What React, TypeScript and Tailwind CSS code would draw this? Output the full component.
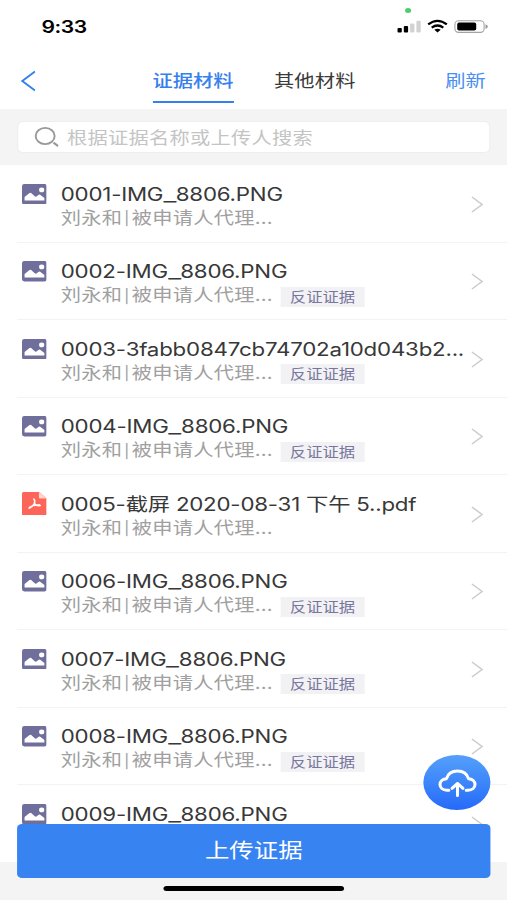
type FileKind = 'image' | 'pdf';

interface Evidence {
  name: string;
  kind: FileKind;
  counter: boolean;
  owner?: string;
}

const owner = '刘永和|被申请人代理...';

const files: Evidence[] = [
  { name: '0001-IMG_8806.PNG', kind: 'image', counter: false, owner },
  { name: '0002-IMG_8806.PNG', kind: 'image', counter: true, owner },
  { name: '0003-3fabb0847cb74702a10d043b2...', kind: 'image', counter: true, owner },
  { name: '0004-IMG_8806.PNG', kind: 'image', counter: true, owner },
  { name: '0005-截屏 2020-08-31 下午 5..pdf', kind: 'pdf', counter: false, owner },
  { name: '0006-IMG_8806.PNG', kind: 'image', counter: true, owner },
  { name: '0007-IMG_8806.PNG', kind: 'image', counter: true, owner },
  { name: '0008-IMG_8806.PNG', kind: 'image', counter: true, owner },
  { name: '0009-IMG_8806.PNG', kind: 'image', counter: false },
];

function ImageIcon() {
  return (
    <svg className="mt-[18.5px] h-[20.5px] w-[20.5px]" viewBox="0 0 25 20.5" preserveAspectRatio="none">
      <rect width="25" height="20.5" rx="2.4" fill="#706f9b" />
      <ellipse cx="19.7" cy="5.9" rx="2.6" ry="2.4" fill="#fff" />
      <path d="M2.6 16.6V13L7.600 9q.8-.6 1.600 0L12.800 12.300q.8.700 1.600.100l2.400-1.600q.7-.5 1.400 0l4.200 3.200v2.600z" fill="#fff" />
    </svg>
  );
}

function PdfIcon() {
  return (
    <svg className="mt-[16.5px] h-[23.5px] w-[20.5px]" viewBox="0 0 25 23.5" preserveAspectRatio="none">
      <path d="M1.5 0H17l8 6.6V22q0 1.5-1.5 1.5h-22Q0 23.5 0 22V1.5Q0 0 1.5 0z" fill="#fc6558" />
      <path d="M17 0l8 6.6h-6.5Q17 6.600 17 5.200z" fill="#fed3cd" />
      <path
        d="M11.8 7C13 8 12.800 10.300 12.300 11.500C11.200 13.800 9.300 15.600 7.200 16.300M12.400 11.300C13.400 13 15.800 14 18.300 13.600M7.500 15.300C10 13.600 13.500 12.700 17.500 13.100"
        fill="none"
        stroke="#fff"
        strokeWidth="1.500"
        strokeLinecap="round"
      />
    </svg>
  );
}

function Title({ name }: { name: string }) {
  const [head, tail] = name.split('_');
  return (
    <div className="h-[24px] text-[18.3px] leading-[24px] tracking-[-0.180px] text-[#383838]">
      {head}
      {tail && <span className="inline-block w-[10.200px] origin-left scale-x-[1.270]">_</span>}
      {tail}
    </div>
  );
}

function Owner({ text }: { text: string }) {
  const [person, role] = text.split('|');
  return (
    <span className="flex w-[179.800px] items-center text-[16.600px] leading-[22px] tracking-[0.200px] text-[#a0a0a0]">
      {person}
      <span className="mt-[1px] w-[7.800px] text-center text-[13.500px]">|</span>
      {role}
    </span>
  );
}

function Row({ file }: { file: Evidence }) {
  return (
    <li className="ml-[14px] flex h-[77.5px] shrink-0 border-b-[1.5px] border-[#f3f3f4] pl-[3.6px]">
      {file.kind === 'pdf' ? <PdfIcon /> : <ImageIcon />}
      <div className="ml-[11.7px] flex w-[336px] flex-col pt-[16.700px] whitespace-nowrap">
        <Title name={file.name} />
        <div className="flex h-[24px] items-center">
          {file.owner && <Owner text={file.owner} />}
          {file.counter && (
            <span className="mt-[3px] flex h-[20px] w-[69.600px] items-center justify-center bg-[#f2f2f4] text-[13.400px] text-[#77769f]">
              反证证据
            </span>
          )}
        </div>
      </div>
      <svg className="mt-[30.500px] h-[17px] w-[10px]" viewBox="0 0 12 17" preserveAspectRatio="none" fill="none">
        <path d="M1 1L11 8.500L1 16" stroke="#cbcbcb" strokeWidth="1.500" />
      </svg>
    </li>
  );
}

function StatusBar() {
  return (
    <div className="relative flex h-[53px] items-start pl-[34px] text-black">
      <span className="mt-[15px] w-[290px] text-[17.300px] leading-[23px] font-semibold tracking-[-0.400px]">9:33</span>
      <span className="absolute top-[8px] left-[332px] h-[5px] w-[4.500px] rounded-full bg-[#4fcb73]" />
      <svg className="mt-[19px] ml-[0.500px] h-[15px] w-[76px]" viewBox="0 0 92.700 15" preserveAspectRatio="none">
        <rect x="1" y="9" width="4.300" height="4.500" rx="1" fill="#000" />
        <rect x="7.300" y="7" width="4.300" height="6.500" rx="1" fill="#000" />
        <rect x="13.600" y="4.500" width="4.300" height="9" rx="1" fill="#d2d2d2" />
        <rect x="19.900" y="1.800" width="4.300" height="11.700" rx="1" fill="#d2d2d2" />
        <g fill="none" stroke="#000" strokeWidth="2.200">
          <path d="M31.700 5.400Q41 -1.800 50.300 5.400" />
          <path d="M35.200 8.700Q41 4.300 46.800 8.700" />
        </g>
        <path d="M37.800 10.800Q41 8.800 44.200 10.800L41 13.400z" fill="#000" />
        <rect x="58.400" y="1.800" width="29.200" height="11.600" rx="3.600" fill="none" stroke="#a3a3a3" strokeWidth="1.100" />
        <rect x="60.700" y="3.600" width="19" height="8" rx="1.800" fill="#000" />
        <path d="M89 5.300q2.300.6 2.300 2.300t-2.300 2.300z" fill="#999" />
      </svg>
    </div>
  );
}

export default function App() {
  return (
    <div className="h-[900px] w-[507px] overflow-hidden bg-white">
      <div className="relative flex h-[900px] w-[415.600px] origin-top-left scale-x-[1.22] flex-col bg-[#f4f4f4] font-[Inter,'Noto_Sans_CJK_SC',sans-serif]">
        <header className="h-[109px] shrink-0 bg-white">
          <StatusBar />
          <nav className="flex h-[50px] items-start text-[16.600px] leading-[24px] whitespace-nowrap">
            <svg className="mt-[17px] ml-[16.500px] h-[22px] w-[12.500px]" viewBox="0 0 15 22" preserveAspectRatio="none" fill="none">
              <path d="M14 1.500L1.500 11L14 20.500" stroke="#3580ed" strokeWidth="1.900" />
            </svg>
            <div className="mt-[16px] ml-[95.500px] flex h-[34px] w-[67.500px] justify-center rounded-[1px] border-b-[2.500px] border-[#3580ed] font-medium text-[#3580ed]">
              证据材料
            </div>
            <div className="mt-[16px] ml-[32.500px] w-[67px] tracking-[0.150px] text-[#3a3a3a]">其他材料</div>
            <div className="mt-[16px] ml-[73.500px] text-[#4a8df5]">刷新</div>
          </nav>
        </header>
        <div className="h-[56px] shrink-0 px-[14px] pt-[12px]">
          <div className="flex h-[32px] items-center rounded-[5px] border border-[#eeeeee] bg-white pl-[12.500px]">
            <svg className="-mt-[1px] h-[21px] w-[20.500px]" viewBox="0 0 25 22" preserveAspectRatio="none" fill="none" stroke="#999" strokeWidth="1.900">
              <ellipse cx="11" cy="10.500" rx="9.500" ry="8.500" />
              <path d="M19.300 17.500L24 21" strokeWidth="2.200" />
            </svg>
            <span className="mt-[1px] ml-[7px] text-[16.600px] leading-[24px] tracking-[0.200px] whitespace-nowrap text-[#c4c4c4]">
              根据证据名称或上传人搜索
            </span>
          </div>
        </div>
        <ul className="flex h-[697px] shrink-0 flex-col overflow-hidden bg-white">
          {files.map((file) => (
            <Row key={file.name} file={file} />
          ))}
        </ul>
        <button className="absolute top-[755px] left-[347px] flex h-[55px] w-[55px] items-center justify-center rounded-full bg-linear-to-b from-[#55a0fa] to-[#2769fa]">
          <svg className="mt-[1px] h-[28px] w-[32px]" viewBox="0 0 39 28" preserveAspectRatio="none" fill="none" stroke="#fff" strokeWidth="3" strokeLinecap="round" strokeLinejoin="round">
            <path d="M10.800 21.200H9C4.500 21.200 2 18.500 2 15.500C2 12.200 5 9.900 8.500 9.700C9.800 5 14 2 19.500 2C25 2 29.200 5 30.500 9.700C34 9.900 37 12.200 37 15.500C37 18.500 34.500 21.200 30 21.200H28.200" />
            <path d="M19.500 26.500V14.500M14 19.300L19.500 14.500L25 19.300" />
          </svg>
        </button>
        <button className="absolute top-[823.500px] left-[14px] flex h-[54px] w-[388px] items-center justify-center rounded-[4px] bg-[#3883f2] text-[20px] text-white">
          上传证据
        </button>
        <div className="absolute top-[885.500px] left-[134.400px] h-[5.500px] w-[148px] rounded-full bg-black" />
      </div>
    </div>
  );
}
